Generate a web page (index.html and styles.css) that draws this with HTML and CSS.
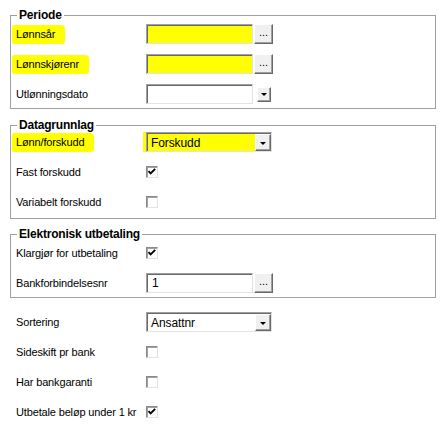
FILE: index.html
```html
<!DOCTYPE html>
<html lang="no">
<head>
<meta charset="utf-8">
<title>Lønnskjøring</title>
<link rel="stylesheet" href="styles.css">
</head>
<body>
<div class="form">
  <fieldset class="group g1">
    <legend>Periode</legend>
    <div class="rows">
      <div class="row"><span class="label"><span class="mark">Lønnsår</span></span><div class="ctl"><span class="field hl"></span><span class="btn">...</span></div></div>
      <div class="row"><span class="label"><span class="mark">Lønnskjørenr</span></span><div class="ctl"><span class="field hl"></span><span class="btn">...</span></div></div>
      <div class="row"><span class="label">Utlønningsdato</span><div class="ctl"><span class="field"></span><span class="drop"><span class="tri"></span></span></div></div>
    </div>
  </fieldset>

  <fieldset class="group g2">
    <legend>Datagrunnlag</legend>
    <div class="rows">
      <div class="row"><span class="label"><span class="mark">Lønn/forskudd</span></span><div class="ctl"><span class="select hl hlx"><span class="val">Forskudd</span><span class="arrow"><span class="tri"></span></span></span></div></div>
      <div class="row"><span class="label">Fast forskudd</span><div class="ctl"><span class="check on"><svg viewBox="0 0 12 12" width="12" height="12"><path d="M2.5 5.2 L4.6 7.4 L9.2 2.8" fill="none" stroke="#000" stroke-width="1.9"/></svg></span></div></div>
      <div class="row"><span class="label">Variabelt forskudd</span><div class="ctl"><span class="check"></span></div></div>
    </div>
  </fieldset>

  <fieldset class="group g3">
    <legend>Elektronisk utbetaling</legend>
    <div class="rows">
      <div class="row"><span class="label">Klargjør for utbetaling</span><div class="ctl"><span class="check on"><svg viewBox="0 0 12 12" width="12" height="12"><path d="M2.5 5.2 L4.6 7.4 L9.2 2.8" fill="none" stroke="#000" stroke-width="1.9"/></svg></span></div></div>
      <div class="row"><span class="label">Bankforbindelsesnr</span><div class="ctl"><span class="field"><span class="val">1</span></span><span class="btn">...</span></div></div>
    </div>
  </fieldset>

  <div class="rows plain">
    <div class="row"><span class="label">Sortering</span><div class="ctl"><span class="select"><span class="val">Ansattnr</span><span class="arrow"><span class="tri"></span></span></span></div></div>
    <div class="row"><span class="label">Sideskift pr bank</span><div class="ctl"><span class="check"></span></div></div>
    <div class="row"><span class="label">Har bankgaranti</span><div class="ctl"><span class="check"></span></div></div>
    <div class="row"><span class="label">Utbetale beløp under 1 kr</span><div class="ctl"><span class="check on"><svg viewBox="0 0 12 12" width="12" height="12"><path d="M2.5 5.2 L4.6 7.4 L9.2 2.8" fill="none" stroke="#000" stroke-width="1.9"/></svg></span></div></div>
  </div>
</div>
</body>
</html>
```
FILE: styles.css
```css
html, body {
  margin: 0;
  padding: 0;
  background: #fff;
}
body {
  font-family: "Liberation Sans", Arial, sans-serif;
  font-size: 11px;
  color: #000;
  letter-spacing: -0.15px;
}
.form {
  width: 426px;
  padding: 8px 0 0 10px;
}
fieldset.group {
  margin: 0;
  min-width: 0;
  border: 1px solid #a0a0a0;
  padding: 0 0 4px 5px;
}
legend {
  font-weight: bold;
  font-size: 12px;
  line-height: 14px;
  padding: 0 2px;
  margin-left: 1px;
  letter-spacing: -0.2px;
}
.group.g1 .rows { margin-top: 2px; }
.group.g2 { margin-top: 9px; padding-bottom: 6px; }
.group.g3 { margin-top: 8px; }
.group.g3 .rows { margin-top: 2px; }
.rows {
  display: flex;
  flex-direction: column;
  gap: 10px;
}
.rows.plain {
  margin-top: 14px;
  padding-left: 6px;
}
.row {
  display: flex;
  align-items: center;
  height: 20px;
}
.label {
  width: 130px;
  flex: none;
  line-height: 13px;
  white-space: nowrap;
}
.mark {
  display: inline-block;
  background: #ffff00;
  padding: 3px 10px 3px 4px;
  margin-left: -4px;
  border-radius: 2px 4px 3px 2px;
}
.ctl {
  display: flex;
  align-items: center;
}
.field {
  box-sizing: border-box;
  width: 107px;
  height: 20px;
  background: #fff;
  border: 1px solid;
  border-color: #a0a0a0 #e3e3e3 #e3e3e3 #a0a0a0;
  box-shadow: inset 1px 1px 0 #696969;
  display: flex;
  align-items: center;
  padding-left: 5px;
}
.field.hl { background: #ffff00; }
.btn {
  box-sizing: border-box;
  width: 19px;
  height: 20px;
  margin-left: 1px;
  background: #f0f0f0;
  border: 1px solid;
  border-color: #fff #696969 #696969 #fff;
  box-shadow: inset -1px -1px 0 #a0a0a0;
  font-size: 11px;
  line-height: 14px;
  text-align: center;
  letter-spacing: 0;
}
.drop {
  box-sizing: border-box;
  width: 14px;
  height: 15px;
  margin-left: 4px;
  background: #f0f0f0;
  border: 1px solid;
  border-color: #fff #696969 #696969 #fff;
  box-shadow: inset -1px -1px 0 #a0a0a0;
  display: flex;
  align-items: center;
  justify-content: center;
}
.tri {
  width: 0;
  height: 0;
  border-left: 3px solid transparent;
  border-right: 3px solid transparent;
  border-top: 3px solid #000;
  margin-top: 1px;
}
.select {
  box-sizing: border-box;
  width: 126px;
  height: 20px;
  background: #fff;
  border: 1px solid;
  border-color: #a0a0a0 #e3e3e3 #e3e3e3 #a0a0a0;
  box-shadow: inset 1px 1px 0 #696969;
  display: flex;
  align-items: center;
  padding: 1px 0 0 4px;
}
.select.hl { background: #ffff00; }
.select.hlx { box-shadow: inset 1px 1px 0 #696969, -3px 0 0 #ffff00; }
.select .val {
  flex: 1;
  font-size: 12px;
  letter-spacing: -0.1px;
}
.field .val { font-size: 12px; }
.arrow {
  box-sizing: border-box;
  width: 16px;
  height: 17px;
  background: #f0f0f0;
  border: 1px solid;
  border-color: #fff #696969 #696969 #fff;
  box-shadow: inset -1px -1px 0 #a0a0a0;
  display: flex;
  align-items: center;
  justify-content: center;
}
.check {
  box-sizing: border-box;
  width: 12px;
  height: 12px;
  background: #fff;
  border: 1px solid;
  border-color: #8a8a8a #e3e3e3 #e3e3e3 #8a8a8a;
  box-shadow: inset 1px 1px 0 #a0a0a0;
}
.check svg {
  display: block;
  margin: -1px 0 0 -1px;
}
```
